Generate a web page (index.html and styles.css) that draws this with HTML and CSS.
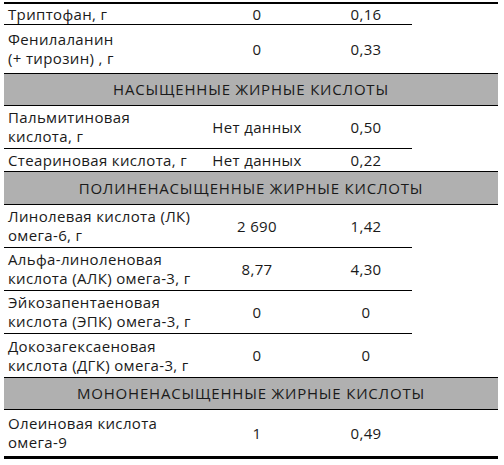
FILE: index.html
```html
<!DOCTYPE html>
<html lang="ru">
<head>
<meta charset="utf-8">
<link rel="stylesheet" href="styles.css">
</head>
<body>
<table class="t">
  <colgroup>
    <col class="c1"><col class="c2"><col class="c3"><col class="c4">
  </colgroup>
  <tbody>
    <tr class="r h20"><td>Триптофан, г</td><td class="v">0</td><td class="v w">0,16</td><td class="e"></td></tr>
    <tr class="r h48"><td>Фенилаланин<br>(+ тирозин) , г</td><td class="v">0</td><td class="v w">0,33</td><td class="e"></td></tr>
    <tr class="hd h31"><td colspan="4">НАСЫЩЕННЫЕ ЖИРНЫЕ КИСЛОТЫ</td></tr>
    <tr class="r h42"><td>Пальмитиновая<br>кислота, г</td><td class="v">Нет данных</td><td class="v w">0,50</td><td class="e"></td></tr>
    <tr class="r h22"><td>Стеариновая кислота, г</td><td class="v">Нет данных</td><td class="v w">0,22</td><td class="e"></td></tr>
    <tr class="hd h32"><td colspan="4">ПОЛИНЕНАСЫЩЕННЫЕ ЖИРНЫЕ КИСЛОТЫ</td></tr>
    <tr class="r h42"><td>Линолевая кислота (ЛК)<br>омега-6, г</td><td class="v">2 690</td><td class="v w">1,42</td><td class="e"></td></tr>
    <tr class="r h42"><td>Альфа-линоленовая<br>кислота (АЛК) омега-3, г</td><td class="v">8,77</td><td class="v w">4,30</td><td class="e"></td></tr>
    <tr class="r h42"><td>Эйкозапентаеновая<br>кислота (ЭПК) омега-3, г</td><td class="v">0</td><td class="v w">0</td><td class="e"></td></tr>
    <tr class="r h43"><td>Докозагексаеновая<br>кислота (ДГК) омега-3, г</td><td class="v">0</td><td class="v w">0</td><td class="e"></td></tr>
    <tr class="hd h31"><td colspan="4">МОНОНЕНАСЫЩЕННЫЕ ЖИРНЫЕ КИСЛОТЫ</td></tr>
    <tr class="last h46"><td>Олеиновая кислота<br>омега-9</td><td class="v">1</td><td class="v w">0,49</td><td class="e"></td></tr>
  </tbody>
</table>
</body>
</html>
```

FILE: styles.css
```css
html, body {
  margin: 0;
  padding: 0;
  background: #fff;
}
body {
  padding: 2px 0 0 4px;
  font-family: "Open Sans", "Noto Sans", sans-serif;
  font-size: 15px;
  line-height: 19px;
  letter-spacing: 0.35px;
  color: #1a1a1a;
}
.t {
  border-collapse: collapse;
  table-layout: fixed;
  width: 494px;
  border-top: 2px solid #000;
  border-bottom: 3px solid #000;
}
.c1 { width: 202px; }
.c2 { width: 102px; }
.c3 { width: 104px; }
.c4 { width: 86px; }
td {
  padding: 0 0 0 4px;
  vertical-align: middle;
  white-space: nowrap;
}
.r td {
  border-bottom: 1px solid #000;
}
.r td.e {
  border-bottom: none;
}
.v {
  text-align: center;
  padding: 0;
}
.w {
  padding-left: 12px;
}
.hd td {
  background: #b0b0b0;
  border-top: 1px solid #000;
  border-bottom: 1px solid #000;
  text-align: center;
  padding: 0;
  letter-spacing: 0.8px;
}
.h20 td { height: 20px; }
.h22 td { height: 22px; }
.h31 td { height: 31px; }
.h32 td { height: 32px; }
.h42 td { height: 42px; }
.h43 td { height: 43px; }
.h46 td { height: 46px; }
.h48 td { height: 48px; }
```
